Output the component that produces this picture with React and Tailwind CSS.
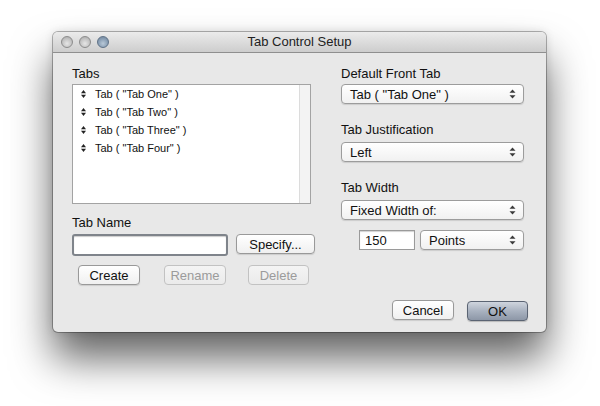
import React from "react";

const font = { fontFamily: '"Liberation Sans", Arial, sans-serif' };

function Arrows() {
  return (
    <svg width="7" height="10" viewBox="0 0 7 10" className="shrink-0">
      <polygon points="3.5,0.5 6.5,3.8 0.5,3.8" fill="#3a3a3a" />
      <polygon points="0.5,6.2 6.5,6.2 3.5,9.5" fill="#3a3a3a" />
    </svg>
  );
}

function Bullet() {
  return (
    <svg width="5" height="8" viewBox="0 0 5 8" className="shrink-0">
      <polygon points="2.5,0 5,3.2 0,3.2" fill="#222" />
      <polygon points="0,4.8 5,4.8 2.5,8" fill="#222" />
    </svg>
  );
}

function Popup({ label, className = "" }) {
  return (
    <div
      className={
        "h-[20px] flex items-center justify-between pl-[8px] pr-[7px] rounded-[4px] border border-[#9c9c9c] bg-gradient-to-b from-[#ffffff] to-[#f1f1f1] shadow-[0_1px_1px_rgba(0,0,0,0.12)] text-[13px] text-[#111] " +
        className
      }
    >
      <span className="leading-none">{label}</span>
      <Arrows />
    </div>
  );
}

function Button({ label, className = "", disabled = false }) {
  return (
    <div
      className={
        "h-[20px] flex items-center justify-center rounded-[4px] border bg-gradient-to-b text-[13px] leading-none " +
        (disabled
          ? "border-[#c2c2c2] from-[#f4f4f4] to-[#ebebeb] text-[#9b9b9b] "
          : "border-[#999999] from-[#ffffff] to-[#f0f0f0] text-[#111] shadow-[0_1px_1px_rgba(0,0,0,0.12)] ") +
        className
      }
    >
      {label}
    </div>
  );
}

function Light({ blue }) {
  return (
    <div
      className={
        "w-[12px] h-[12px] rounded-full border " +
        (blue
          ? "border-[#5f7287] bg-[radial-gradient(circle_at_50%_65%,#b9c9d8_0%,#8a9fb5_55%,#6b7f95_100%)]"
          : "border-[#8c8c8c] bg-[radial-gradient(circle_at_50%_65%,#e6e6e6_0%,#c4c4c4_55%,#a3a3a3_100%)]")
      }
    />
  );
}

export default function App() {
  const tabs = ['Tab ( "Tab One" )', 'Tab ( "Tab Two" )', 'Tab ( "Tab Three" )', 'Tab ( "Tab Four" )'];
  return (
    <div className="w-[600px] h-[406px] bg-white overflow-hidden pt-[32px] pl-[53px]" style={font}>
      <div className="w-[493px] h-[300px] flex flex-col rounded-[5px] overflow-hidden bg-[#e8e8e8] shadow-[0_26px_42px_rgba(0,0,0,0.62),0_0_10px_rgba(0,0,0,0.12),0_0_0_1px_rgba(0,0,0,0.28)]">
        {/* title bar */}
        <div className="h-[21px] shrink-0 relative flex items-center pl-[8px] gap-[6px] bg-gradient-to-b from-[#ebebeb] to-[#cdcdcd] border-b border-[#8f8f8f]">
          <Light />
          <Light />
          <Light blue />
          <div className="absolute inset-0 flex items-center justify-center text-[13px] text-[#222] pointer-events-none">
            Tab Control Setup
          </div>
        </div>

        {/* body */}
        <div className="flex-1 flex flex-col pt-[13px] pl-[19px] pr-[18px] pb-[11px]">
          <div className="flex">
            {/* left column */}
            <div className="w-[244px] flex flex-col">
              <div className="h-[16px] text-[13px] leading-[16px] text-[#111]">Tabs</div>
              <div className="mt-[2px] w-[239px] h-[120px] border border-[#a3a3a3] bg-white flex">
                <div className="flex-1 flex flex-col">
                  {tabs.map((t) => (
                    <div key={t} className="h-[18px] flex items-center pl-[8px] gap-[9px]">
                      <Bullet />
                      <span className="text-[11px] text-[#111] leading-none">{t}</span>
                    </div>
                  ))}
                </div>
                <div className="w-[11px] border-l border-[#dcdcdc] bg-[#f3f3f3]" />
              </div>
              <div className="mt-[11px] h-[16px] text-[13px] leading-[16px] text-[#111]">Tab Name</div>
              <div className="mt-[3px] flex items-start">
                <div className="w-[156px] h-[22px] rounded-[3px] border-2 border-[#7f848b] bg-white shadow-[inset_0_1px_1px_rgba(0,0,0,0.2)]" />
                <Button label="Specify..." className="ml-[8px] w-[79px]" />
              </div>
              <div className="mt-[9px] flex pl-[6px]">
                <Button label="Create" className="w-[62px]" />
                <Button label="Rename" disabled className="ml-[24px] w-[62px]" />
                <Button label="Delete" disabled className="ml-[22px] w-[61px]" />
              </div>
            </div>

            {/* right column */}
            <div className="ml-[25px] w-[183px] flex flex-col">
              <div className="h-[16px] text-[13px] leading-[16px] text-[#111]">Default Front Tab</div>
              <Popup label={'Tab ( "Tab One" )'} className="mt-[2px]" />
              <div className="mt-[18px] h-[16px] text-[13px] leading-[16px] text-[#111]">Tab Justification</div>
              <Popup label="Left" className="mt-[4px]" />
              <div className="mt-[18px] h-[16px] text-[13px] leading-[16px] text-[#111]">Tab Width</div>
              <Popup label="Fixed Width of:" className="mt-[4px]" />
              <div className="mt-[10px] flex pl-[18px]">
                <div className="w-[56px] h-[20px] border border-[#9a9a9a] bg-white shadow-[inset_0_1px_1px_rgba(0,0,0,0.18)] flex items-center pl-[5px] text-[13px] text-[#111] leading-none">
                  150
                </div>
                <Popup label="Points" className="ml-[5px] w-[104px]" />
              </div>
            </div>
          </div>

          <div className="flex-1" />

          <div className="flex justify-end items-start">
            <Button label="Cancel" className="w-[62px]" />
            <div className="ml-[13px] mt-[1px] w-[61px] h-[20px] flex items-center justify-center rounded-[4px] border border-[#5b6473] bg-gradient-to-b from-[#cfd5de] via-[#a9b2c0] to-[#8d97a7] text-[13px] text-[#111] leading-none shadow-[0_1px_1px_rgba(0,0,0,0.2)]">
              OK
            </div>
          </div>
        </div>
      </div>
    </div>
  );
}
